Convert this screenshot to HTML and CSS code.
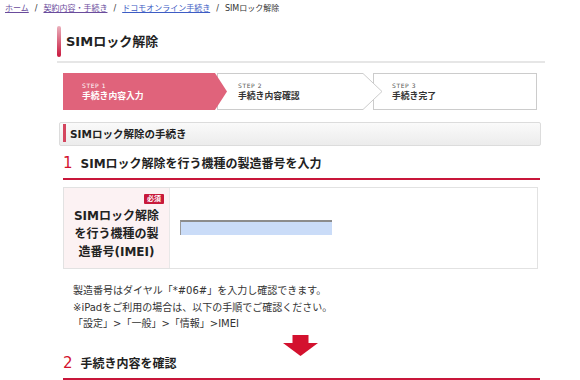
FILE: index.html
```html
<!DOCTYPE html>
<html lang="ja">
<head>
<meta charset="utf-8">
<title>SIMロック解除</title>
<link rel="stylesheet" href="styles.css">
</head>
<body>
<nav class="crumb"><a class="v" href="#">ホーム</a><span class="sep">/</span><a class="v" href="#">契約内容・手続き</a><span class="sep">/</span><a href="#">ドコモオンライン手続き</a><span class="sep">/</span><span class="cur">SIMロック解除</span></nav>
<div class="page">
  <div class="title"><h1>SIMロック解除</h1></div>
  <div class="content">
    <ol class="steps">
      <li class="step s1"><span class="no">STEP 1</span><span class="nm">手続き内容入力</span></li>
      <li class="step s2"><span class="no">STEP 2</span><span class="nm">手続き内容確認</span><svg class="chev" width="20" height="37" viewBox="0 0 20 37"><polyline points="0,0.5 19,18.5 0,36.5" fill="#fff" stroke="#cccccc" stroke-width="1"/></svg></li>
      <li class="step s3"><span class="no">STEP 3</span><span class="nm">手続き完了</span></li>
    </ol>
    <div class="bar">SIMロック解除の手続き</div>
    <h2 class="hd"><span class="num">1</span>SIMロック解除を行う機種の製造番号を入力</h2>
    <div class="form">
      <div class="lbl"><div class="reqrow"><span class="req">必須</span></div><p>SIMロック解除<br>を行う機種の製<br>造番号(IMEI)</p></div>
      <div class="fld"><input type="text" class="imei" aria-label="製造番号(IMEI)"></div>
    </div>
    <div class="notes">
      <p>製造番号はダイヤル「*#06#」を入力し確認できます。</p>
      <p>※iPadをご利用の場合は、以下の手順でご確認ください。</p>
      <p>「設定」&gt;「一般」&gt;「情報」&gt;IMEI</p>
    </div>
    <div class="down"><svg width="35" height="21" viewBox="0 0 35 21"><rect x="9.5" y="0" width="16" height="8" fill="#d3112e"/><polygon points="0,8 35,8 17.5,21" fill="#d3112e"/></svg></div>
    <h2 class="hd hd2"><span class="num">2</span>手続き内容を確認</h2>
  </div>
</div>
</body>
</html>
```

FILE: styles.css
```css
* { box-sizing: border-box; }
html, body { margin: 0; padding: 0; background: #fff; }
body {
  font-family: "DejaVu Sans", "Noto Sans CJK JP", sans-serif;
  color: #333;
}
.crumb {
  font-size: 8px;
  line-height: 12px;
  padding: 3px 0 0 5px;
  height: 18px;
  white-space: nowrap;
}
.crumb a { color: #3d5cc4; text-decoration: underline; }
.crumb a.v { color: #6a4c9c; }
.crumb .sep { margin: 0 6px; color: #333; }
.crumb .cur { color: #333; }

.page { margin: 8px 0 0 57px; width: 488px; }
.title { border-bottom: 2px solid #e6e6e6; padding-bottom: 4px; }
.title h1 {
  margin: 0;
  height: 31px;
  line-height: 31px;
  font-size: 13px;
  font-weight: bold;
  color: #222;
  padding-left: 9px;
  position: relative;
}
.title h1::before {
  content: "";
  position: absolute;
  left: 0; top: 0; bottom: 0;
  width: 4px;
  border-radius: 2px;
  background: linear-gradient(#eab0bc, #c9173d);
}

.content { margin-left: 6px; width: 477px; }

.steps {
  list-style: none;
  margin: 10px 0 0;
  padding: 0;
  display: flex;
  height: 37px;
}
.step {
  position: relative;
  height: 37px;
  display: flex;
  flex-direction: column;
  justify-content: center;
  color: #333;
}
.step .no { font-size: 6px; line-height: 8px; letter-spacing: 0.6px; color: #555; }
.step .nm { font-size: 8.8px; line-height: 12px; font-weight: bold; }
.s1 {
  width: 152px;
  background: #e0637b;
  padding-left: 19px;
  color: #fff;
}
.s1 .no { color: #fff; }
.s1::after {
  content: "";
  position: absolute;
  left: 100%; top: 0;
  width: 12px; height: 37px;
  background: #e0637b;
  clip-path: polygon(0 0, 100% 50%, 0 100%);
  z-index: 2;
}
.s2 {
  margin-left: 2px;
  width: 146px;
  border: 1px solid #cccccc;
  border-right: none;
  padding-left: 20px;
}
.s2 .chev { position: absolute; left: 100%; top: -1px; z-index: 2; }
.s3 {
  margin-left: 10px;
  width: 164px;
  border: 1px solid #cccccc;
  padding-left: 18px;
}

.bar {
  margin: 12px -1px 0 -4px;
  height: 24px;
  border: 1px solid #dcdcdc;
  border-radius: 2px;
  background: linear-gradient(#fafafa, #ececec);
  font-size: 10.5px;
  font-weight: bold;
  line-height: 22px;
  padding-left: 10px;
  position: relative;
  color: #222;
}
.bar::before {
  content: "";
  position: absolute;
  left: 3px; top: 1px; bottom: 3px;
  width: 3px;
  background: #d4465f;
}

.hd {
  margin: 7px 0 0;
  font-size: 12px;
  font-weight: bold;
  line-height: 20px;
  padding-bottom: 4px;
  border-bottom: 2px solid #c8163a;
  color: #222;
}
.hd .num {
  color: #d3112e;
  font-weight: normal;
  font-size: 15px;
  margin-right: 8px;
}
.hd2 { margin-top: -3px; }

.form {
  margin-top: 7px;
  width: 475px;
  height: 82px;
  border: 1px solid #e2e2e2;
  display: flex;
}
.lbl {
  width: 106px;
  background: #fcf2f3;
  border-right: 1px solid #e8e8e8;
  padding: 6px 5px 0 0;
}
.reqrow { display: flex; justify-content: flex-end; height: 13px; }
.req {
  display: block;
  height: 10px;
  background: #c8193a;
  color: #fff;
  font-size: 7px;
  line-height: 10px;
  padding: 0 3px;
  border-radius: 1px;
  font-weight: bold;
}
.lbl p {
  margin: 0;
  padding-left: 5px;
  text-align: center;
  font-size: 12px;
  font-weight: bold;
  line-height: 18px;
  color: #222;
}
.fld { flex: 1; display: flex; align-items: center; padding-left: 10px; }
.imei {
  width: 152px;
  height: 15px;
  margin: 0 0 1px;
  padding: 0;
  background: #cadcf8;
  border: none;
  border-top: 2px solid #8c8c8c;
  border-left: 1px solid #9a9a9a;
}

.notes { margin-top: 14px; padding-left: 10px; font-size: 10px; line-height: 16.5px; color: #333; }
.notes p { margin: 0; }

.down { margin-top: 2px; height: 21px; display: flex; justify-content: center; }
.down svg { display: block; margin-left: -2px; }
```
